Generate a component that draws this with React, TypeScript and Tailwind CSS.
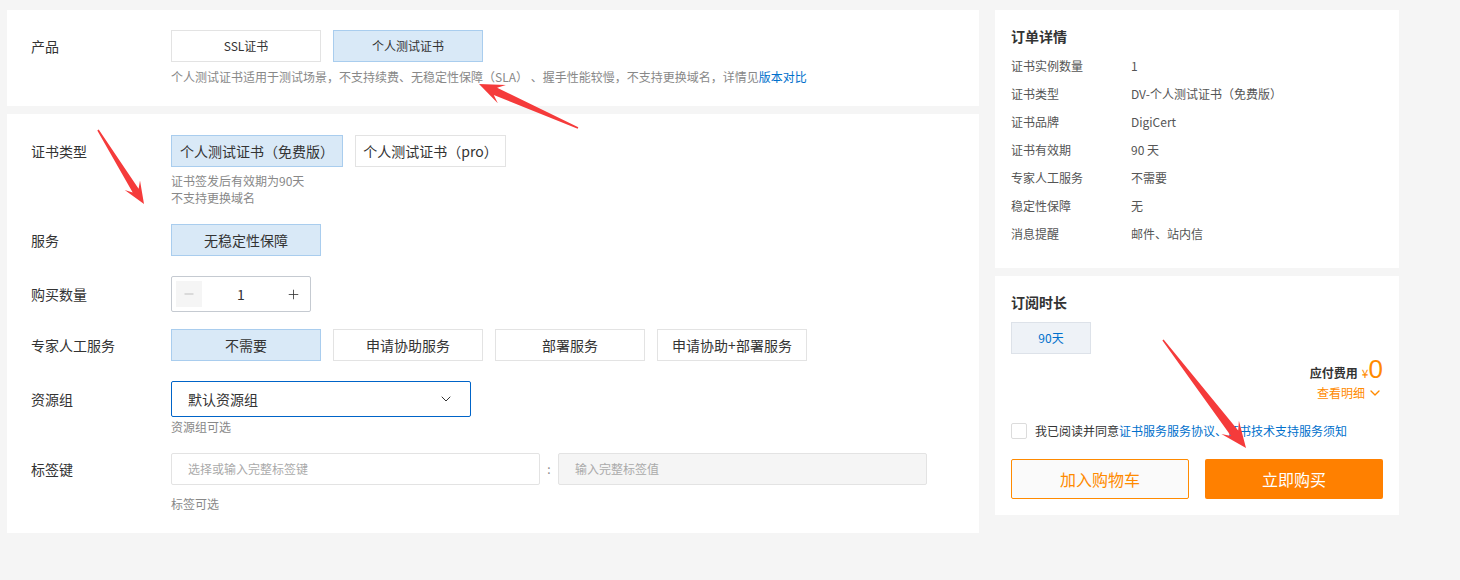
import React from "react";
import { ChevronDown, Minus, Plus } from "lucide-react";

function arrowPoints(tx: number, ty: number, px: number, py: number, head = 24, wing = 10, neck = 4, tailW = 0.8) {
  const dx = px - tx, dy = py - ty;
  const L = Math.sqrt(dx * dx + dy * dy);
  const ux = dx / L, uy = dy / L;
  const nx = -uy, ny = ux;
  const bx = px - ux * head, by = py - uy * head;
  const nkx = px - ux * head * 0.72, nky = py - uy * head * 0.72;
  const pts = [
    [tx + nx * tailW, ty + ny * tailW],
    [nkx + nx * neck, nky + ny * neck],
    [bx + nx * wing, by + ny * wing],
    [px, py],
    [bx - nx * wing, by - ny * wing],
    [nkx - nx * neck, nky - ny * neck],
    [tx - nx * tailW, ty - ny * tailW],
  ];
  return pts.map((p) => p[0].toFixed(1) + "," + p[1].toFixed(1)).join(" ");
}

const sel = "bg-[#d9e9f7] border-[#a9cdee]";
const unsel = "bg-white border-[#e3e3e3]";

function OptBtn({ children, selected, w, small }: { children: React.ReactNode; selected?: boolean; w: string; small?: boolean }) {
  return (
    <div
      className={`h-[32px] flex items-center justify-center border text-[#333] ${selected ? sel : unsel} ${w} ${small ? "text-[12px]" : "text-[14px]"}`}
    >
      {children}
    </div>
  );
}

function Label({ children, h = "h-[32px]" }: { children: React.ReactNode; h?: string }) {
  return <div className={`w-[140px] shrink-0 flex items-center text-[14px] text-[#333] ${h}`}>{children}</div>;
}

const detailRows: [string, string][] = [
  ["证书实例数量", "1"],
  ["证书类型", "DV-个人测试证书（免费版）"],
  ["证书品牌", "DigiCert"],
  ["证书有效期", "90 天"],
  ["专家人工服务", "不需要"],
  ["稳定性保障", "无"],
  ["消息提醒", "邮件、站内信"],
];

export default function App() {
  return (
    <div className="relative w-[1460px] h-[580px] bg-[#f5f5f5] font-['Noto_Sans_CJK_SC',sans-serif] overflow-hidden">
      <div className="flex pt-[10px] pl-[7px] gap-[16px]">
        {/* Left column */}
        <div className="w-[972px] flex flex-col gap-[8px]">
          {/* Panel 1 */}
          <div className="bg-white pl-[24px] pt-[20px] pb-[21px]">
            <div className="flex">
              <Label>产品</Label>
              <div>
                <div className="flex gap-[12px]">
                  <OptBtn w="w-[150px]" small>SSL证书</OptBtn>
                  <OptBtn w="w-[150px]" selected small>个人测试证书</OptBtn>
                </div>
                <div className="mt-[7px] text-[12px] leading-[16px] text-[#888]">
                  个人测试证书适用于测试场景，不支持续费、无稳定性保障（SLA）&nbsp;、握手性能较慢，不支持更换域名，详情见
                  <span className="text-[#0070cc]">版本对比</span>
                </div>
              </div>
            </div>
          </div>

          {/* Panel 2 */}
          <div className="bg-white pl-[24px] pt-[21px] pb-[21px] h-[419px]">
            <div className="flex">
              <Label>证书类型</Label>
              <div>
                <div className="flex gap-[12px]">
                  <OptBtn w="w-[172px]" selected>个人测试证书（免费版）</OptBtn>
                  <OptBtn w="w-[151px]">个人测试证书（pro）</OptBtn>
                </div>
                <div className="mt-[5px] text-[12px] leading-[17px] text-[#888]">
                  <div>证书签发后有效期为90天</div>
                  <div>不支持更换域名</div>
                </div>
              </div>
            </div>

            <div className="flex mt-[18px]">
              <Label>服务</Label>
              <OptBtn w="w-[150px]" selected>无稳定性保障</OptBtn>
            </div>

            <div className="flex mt-[20px]">
              <Label h="h-[36px]">购买数量</Label>
              <div className="w-[140px] h-[36px] border border-[#c5cad1] rounded-[2px] flex items-center pl-[4px] pr-[4px]">
                <div className="w-[26px] h-[26px] bg-[#f5f5f5] flex items-center justify-center">
                  <Minus size={14} strokeWidth={1.2} color="#aaa" />
                </div>
                <div className="flex-1 text-center text-[14px] text-[#333]">1</div>
                <div className="w-[26px] h-[26px] flex items-center justify-center">
                  <Plus size={15} strokeWidth={1.3} color="#333" />
                </div>
              </div>
            </div>

            <div className="flex mt-[17px]">
              <Label>专家人工服务</Label>
              <div className="flex gap-[12px]">
                <OptBtn w="w-[150px]" selected>不需要</OptBtn>
                <OptBtn w="w-[150px]">申请协助服务</OptBtn>
                <OptBtn w="w-[150px]">部署服务</OptBtn>
                <OptBtn w="w-[150px]">申请协助+部署服务</OptBtn>
              </div>
            </div>

            <div className="flex mt-[20px]">
              <Label h="h-[36px]">资源组</Label>
              <div>
                <div className="w-[300px] h-[36px] border border-[#0064c8] rounded-[2px] flex items-center justify-between pl-[16px] pr-[16px]">
                  <span className="text-[14px] text-[#333]">默认资源组</span>
                  <ChevronDown size={16} strokeWidth={1.5} color="#333" />
                </div>
                <div className="mt-[2px] text-[12px] leading-[16px] text-[#888]">资源组可选</div>
              </div>
            </div>

            <div className="flex mt-[18px]">
              <Label>标签键</Label>
              <div>
                <div className="flex items-center">
                  <div className="w-[369px] h-[32px] border border-[#e3e3e3] rounded-[2px] flex items-center pl-[16px] text-[12px] text-[#aaa]">
                    选择或输入完整标签键
                  </div>
                  <div className="w-[18px] text-center text-[12px] text-[#888]">:</div>
                  <div className="w-[369px] h-[32px] border border-[#e3e3e3] bg-[#f5f5f5] rounded-[2px] flex items-center pl-[16px] text-[12px] text-[#aaa]">
                    输入完整标签值
                  </div>
                </div>
                <div className="mt-[11px] text-[12px] leading-[16px] text-[#888]">标签可选</div>
              </div>
            </div>
          </div>
        </div>

        {/* Right column */}
        <div className="w-[404px] flex flex-col gap-[8px]">
          <div className="bg-white pl-[16px] pr-[16px] pt-[16px] pb-[20px]">
            <div className="text-[14px] leading-[20px] font-bold text-[#333]">订单详情</div>
            <div className="mt-[6px]">
              {detailRows.map(([k, v]) => (
                <div key={k} className="flex h-[28px] items-center text-[12px] text-[#555]">
                  <div className="w-[120px]">{k}</div>
                  <div>{v}</div>
                </div>
              ))}
            </div>
          </div>

          <div className="bg-white pl-[16px] pr-[16px] pt-[16px] pb-[16px]">
            <div className="text-[14px] leading-[20px] font-bold text-[#333]">订阅时长</div>
            <div className="mt-[10px] w-[80px] h-[32px] bg-[#eef2f7] border border-[#dde2e9] flex items-center justify-center text-[12px] text-[#0070cc]">
              90天
            </div>
            <div className="flex flex-col items-end mt-[2px]">
              <div className="flex items-end h-[26px]">
                <span className="text-[12px] font-bold text-[#333] leading-[16px] mb-[1px]">应付费用</span>
                <span className="text-[12px] text-[#ff8a00] leading-[16px] ml-[4px] mb-[1px]">¥</span>
                <span className="text-[26px] text-[#ff8a00] leading-[26px] font-['Liberation_Sans',sans-serif]">0</span>
              </div>
              <div className="flex items-center h-[16px] mt-[3px] text-[12px] text-[#ff8a00]">
                查看明细
                <ChevronDown size={16} strokeWidth={2} color="#ff8a00" className="ml-[2px]" />
              </div>
            </div>
            <div className="flex items-center mt-[22px] h-[16px]">
              <div className="w-[16px] h-[16px] border border-[#dcdcdc] rounded-[2px] bg-white"></div>
              <span className="ml-[8px] text-[12px] text-[#333]">我已阅读并同意</span>
              <span className="text-[12px] text-[#0070cc]">证书服务服务协议、证书技术支持服务须知</span>
            </div>
            <div className="flex gap-[16px] mt-[20px]">
              <div className="w-[178px] h-[40px] border border-[#ff8a00] bg-[#fafafa] rounded-[2px] flex items-center justify-center text-[16px] text-[#ff8a00]">
                加入购物车
              </div>
              <div className="w-[178px] h-[40px] bg-[#ff8000] rounded-[2px] flex items-center justify-center text-[16px] text-white">
                立即购买
              </div>
            </div>
          </div>
        </div>
      </div>

      {/* Annotation arrows */}
      <svg className="absolute left-0 top-0 pointer-events-none" width="1460" height="580" viewBox="0 0 1460 580">
        <polygon points={arrowPoints(578, 128, 479, 84, 25, 10, 4)} fill="#f53b3b" />
        <polygon points={arrowPoints(98, 130, 144, 204, 22, 9, 3.5)} fill="#f53b3b" />
        <polygon points={arrowPoints(1163, 340, 1246, 448, 26, 11, 4.5)} fill="#f53b3b" />
      </svg>
    </div>
  );
}
